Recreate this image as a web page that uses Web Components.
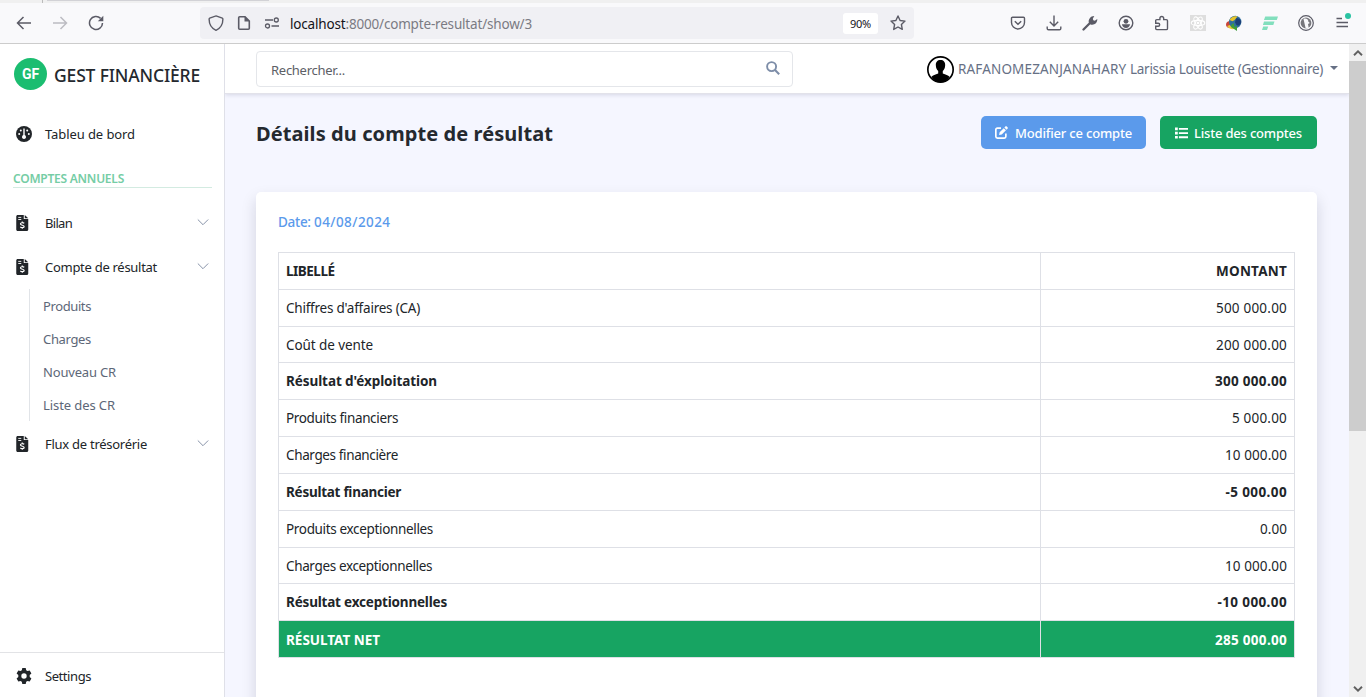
<!DOCTYPE html>
<html lang="fr">
<head>
<meta charset="utf-8">
<title>Gest Financière</title>
<style>
html,body{margin:0;height:100%;overflow:hidden;background:#fff}
body{font-family:"Noto Sans","Open Sans",sans-serif;font-size:13px;color:#212529}
</style>
</head>
<body>
<gf-window></gf-window>
<script>
const define = (name, html, hook) => customElements.define(name, class extends HTMLElement {
  constructor() {
    super();
    const t = document.createElement('template');
    t.innerHTML = html;
    this.attachShadow({ mode: 'open' }).append(t.content.cloneNode(true));
  }
  connectedCallback() { if (hook) hook(this, this.shadowRoot); }
});

// Line of text tracked so that it fills the width given by "w".
define('gf-text', `<style>:host{display:inline-block;white-space:pre;flex:none}</style><slot></slot>`, el => {
  const w = parseFloat(el.getAttribute('w'));
  if (!w) return;
  const n = el.textContent.length;
  const natural = el.getBoundingClientRect().width;
  if (natural) el.style.letterSpacing = ((w - natural) / n).toFixed(3) + 'px';
});

const ICONS = {
  back: ['0 0 16 16', '<path d="M15 8H1.5M7.5 2 1.5 8l6 6" class="s" stroke-width="1.5"/>'],
  fwd: ['0 0 16 16', '<path d="M1 8h13.500M8.500 2l6 6-6 6" class="s" stroke-width="1.5"/>'],
  reload: ['0 0 16 16', '<path d="M14.500 8A6.500 6.500 0 1 1 12.600 3.400" class="s" stroke-width="1.500"/><path d="M15.300.8v5.400H9.800z"/>'],
  shield: ['0 0 16 16', '<path d="M8 .9 14.300 3.200c.4.2.6.500.6.900 0 5.200-2.500 9.300-6.900 11.200C3.600 13.400 1.100 9.300 1.100 4.100c0-.4.2-.7.6-.9z" class="s" stroke-width="1.400"/>'],
  page: ['0 0 16 16', '<path d="M3.700 1.700H9L13.300 6v7.300c0 .7-.400 1-1 1H3.700c-.6 0-1-.3-1-1V2.700c0-.6.4-1 1-1z" class="s" stroke-width="1.600"/><path d="M8.500 1v5.500H14z"/>'],
  perms: ['0 0 16 16', '<path d="M1 5h8M7.500 11H15" class="s" stroke-width="1.400"/><circle cx="12.300" cy="5" r="2" class="s" stroke-width="1.300"/><circle cx="3.500" cy="11" r="2" class="s" stroke-width="1.300"/>'],
  star: ['0 0 16 16', '<path d="M8 1l2.100 4.500 4.900.6-3.600 3.400.9 4.900L8 12l-4.300 2.400.9-4.900L1 6.100l4.900-.6z" class="s" stroke-width="1.400" stroke-linejoin="round"/>'],
  pocket: ['0 0 16 16', '<path d="M2.500 2.200h11c.6 0 1 .4 1 1V7.500a6.500 6.500 0 0 1-13 0V3.200c0-.6.4-1 1-1z" class="s" stroke-width="1.400"/><path d="M4.800 6.300 8 9.300l3.200-3" class="s" stroke-width="1.500"/>'],
  down: ['0 0 16 16', '<path d="M8 .5v10.300M3.800 6.800 8 11l4.200-4.200M1.200 11.500v2c0 .8.500 1.300 1.300 1.300h11c.8 0 1.300-.5 1.300-1.300v-2" class="s" stroke-width="1.400"/>'],
  wrench: ['0 0 16 16', '<path d="M1.500 14.500 8.500 7.500" class="s" stroke-width="2.300" stroke-linecap="round"/><path d="M8.500 9.500 6.800 7.500C6.200 4.500 8.300 1 12.300 1L10.800 3.800l.5 1.500 1.500.4L15.300 4c.2 4-3 6.500-6.800 5.500z"/>'],
  account: ['0 0 16 16', '<circle cx="8" cy="8" r="6.800" class="s" stroke-width="1.400"/><circle cx="8" cy="6.300" r="2.400"/><path d="M3.900 9.300h8.200c-.4 2.200-2 3.700-4.100 3.700s-3.700-1.500-4.100-3.700z"/>'],
  puzzle: ['0 0 16 16', '<path d="M2.700 14.600h9.600c.8 0 1.200-.4 1.200-1.200V5.800c0-.8-.4-1.200-1.200-1.200H9.700V3.400a1.900 1.900 0 0 0-3.800 0v1.200H2.700c-.6 0-1 .4-1 1v2.600h2.500a1.500 1.500 0 0 1 0 3H1.700v2.400c0 .6.400 1 1 1z" class="s" stroke-width="1.400"/>'],
  react: ['0 0 16 16', '<path d="M0 0h16v16H0z" fill="#dedede"/><g fill="none" stroke="#fff" stroke-width="1.100"><ellipse cx="8" cy="8" rx="6.800" ry="2.600"/><ellipse cx="8" cy="8" rx="6.800" ry="2.600" transform="rotate(60 8 8)"/><ellipse cx="8" cy="8" rx="6.800" ry="2.600" transform="rotate(120 8 8)"/></g><circle cx="8" cy="8" r="1.300" fill="#fff"/>'],
  globe: ['0 0 16 16', '<ellipse cx="4.500" cy="9.500" rx="4.500" ry="3.600" fill="#c9443a"/><path d="M1 11c2 3 5 3.500 7.500 3L7 9z" fill="#e7c83a"/><circle cx="9.200" cy="7" r="6.200" fill="#2f6f9c"/><path d="M3.500 5C5 1.500 9 .5 11.500 1.500 10 3 9.500 5 6.500 6.200z" fill="#e8c52c"/><path d="M10 3.500c2-.8 4.300.5 5 2.500s-1 4.500-3 4.500-2-2-3-3z" fill="#1c3f78"/><path d="M5.500 9.500 8 8v3l2 1 1-2v6L5 12z" fill="#3f9d3a"/>'],
  bars: ['0 0 16 16', '<g fill="#82dfbd"><path d="M3.200 1.500H16L14.800 5H2zM2 6.500h10.500L11.300 10H.9zM1.200 11.500h5L5 15H0z"/></g>'],
  duck: ['0 0 16 16', '<circle cx="8" cy="8" r="7.300" class="s" stroke-width="1.200"/><circle cx="8" cy="8" r="5.400" fill="#77777c"/><path d="M5.500 4c2-1.200 4.800-.2 4.900 2.800l1.500 1.300-1.900.8.7 4.200-3 .5z" fill="#f9f9fb"/>'],
  menu: ['0 0 16 16', '<path d="M2.500 3.500h5.500M2.500 7.500h11.500M2.500 11.500h11.500" class="s" stroke-width="1.300"/>'],
  gauge: ['0 0 16 16', '<circle cx="8" cy="8" r="8"/><g fill="#fff"><path d="M7.300 2.500h1.400v6.600a2 2 0 1 1-1.400 0z"/><circle cx="4.800" cy="4.600" r="1"/><circle cx="11.200" cy="4.600" r="1"/><circle cx="3.200" cy="8" r="1"/><circle cx="12.800" cy="8" r="1"/></g>'],
  invoice: ['0 0 12 16', '<path d="M1.500 0H7.500v4H12v10.500c0 .9-.6 1.500-1.500 1.500h-9C.6 16 0 15.400 0 14.500v-13C0 .6.600 0 1.500 0zM8.500 0 12 3.200H8.500z"/><path d="M2 2.400h3M2 4.500h3" stroke="#fff" stroke-width=".9"/><path d="M8 8.300C6.500 7.300 4.100 7.600 4.200 9c.1 1.500 3.700 1 3.700 2.500 0 1.400-2.500 1.500-3.900.5M6 6.500v1.200M6 12.500v1.300" fill="none" stroke="#fff" stroke-width="1.200"/>'],
  gear: ['0 0 16 16', '<path fill-rule="evenodd" d="M6.300 0h3.400l.5 2.300 1.300.8L13.700 2.400l1.700 3-1.700 1.600v2l1.700 1.600-1.700 3-2.200-.7-1.300.8L9.700 16H6.300l-.5-2.300-1.300-.8-2.200.7-1.700-3L2.300 9V7L.6 5.400l1.700-3 2.200.7 1.300-.8zM8 5.300a2.700 2.700 0 1 0 0 5.400 2.700 2.700 0 0 0 0-5.400z"/>'],
  chev: ['0 0 12 8', '<path d="M.8 1.500 6 6.700l5.200-5.200" class="s" stroke-width="1"/>'],
  search: ['0 0 14 14', '<circle cx="5.600" cy="5.600" r="4.500" class="s" stroke-width="1.900"/><path d="m9 9 4.200 4.200" class="s" stroke-width="2.100"/>'],
  avatar: ['0 0 26 26', '<circle cx="13" cy="13" r="12.200" fill="#fff" stroke="#000" stroke-width="1.600"/><path d="M13 3.800c3 0 4.600 2 4.500 5-.1 2.700-1 4.400-2.300 5.700v2.300c2.700.9 5.200 1.700 6.500 3.200C19.700 23.500 16.600 25.300 13 25.300S6.300 23.500 4.300 20c1.300-1.500 3.800-2.300 6.500-3.200v-2.300C9.500 13.200 8.600 11.500 8.500 8.800c-.1-3 1.500-5 4.500-5z"/>'],
  edit: ['0 0 14 14', '<path d="M6.500 2.300H2.600C1.500 2.300.9 2.900.9 4v7.400c0 1.100.6 1.700 1.700 1.700H10c1.100 0 1.700-.6 1.700-1.700V8" class="s" stroke-width="1.800"/><path d="M4.400 9.800 5 6.700 9.400 2.300l2.400 2.400L7.300 9.200zM10.100 1.600l1-1c.5-.5 1.100-.5 1.600 0l.8.8c.5.5.5 1.100 0 1.600l-1 1z"/>'],
  list: ['0 0 14 12', '<path d="M0 .1h3v3H0zM0 4.600h3v3H0zM0 9.100h3v2.900H0zM4.200.6H14v2H4.200zM4.200 5.100H14v2H4.200zM4.200 9.600H14v2H4.200z"/>'],
  up: ['0 0 10 6', '<path d="M1 5.200 5 1.300l4 3.900" class="s" stroke-width="1.900"/>'],
  dn: ['0 0 10 6', '<path d="M1 .8 5 4.700 9 .8" class="s" stroke-width="1.900"/>']
};
define('gf-icon', `<style>:host{display:inline-block;flex:none;line-height:0}#i{height:100%}svg{display:block;width:100%;height:100%;fill:currentColor}.s{fill:none;stroke:currentColor}</style><div id="i"></div>`, (el, r) => {
  const [vb, body] = ICONS[el.getAttribute('name')];
  const s = (el.getAttribute('size') || '16').split('x');
  el.style.width = s[0] + 'px';
  el.style.height = (s[1] || s[0]) + 'px';
  r.getElementById('i').innerHTML = `<svg viewBox="${vb}">${body}</svg>`;
});

define('gf-browser-bar', `<style>
:host{display:block;height:44px;box-sizing:border-box;background:#f9f9fb;border-bottom:1px solid #ccc;color:#5b5b66}
.tabs{height:3px;background:#f0f0f0;display:flex}
.edge{width:42px;border-right:1px solid #bbb}
.tab{margin-left:4px;width:222px;height:1px;background:#d2d2d6}
.row{height:40px;display:flex;align-items:center;box-sizing:border-box;padding:0 16px}
.nav{display:flex;gap:20px;width:184px}
.url{width:714px;height:32px;border-radius:4px;background:#f0f0f4;display:flex;align-items:center;box-sizing:border-box;padding:0 8px;color:#7b7b83}
.url gf-icon{margin-right:12px;color:#5b5b66}
.url b{font-weight:400;color:#15141a}
.addr{font-size:13.500px;position:relative;top:1px}
.zoom{margin-left:auto;margin-right:12px;background:#fff;width:35px;height:21px;border-radius:3px;display:flex;justify-content:center;align-items:center;color:#15141a;font-size:11px}
.url gf-icon.star{margin:0}
.tools{margin-left:auto;display:flex;gap:20px}
.m{position:relative;display:flex}
.m i{position:absolute;width:6px;height:6px;border-radius:50%;background:#2ac3a2;right:-1px;top:-2px}
</style>
<div class="tabs"><div class="edge"></div><div class="tab"></div></div>
<div class="row">
<div class="nav"><gf-icon name="back"></gf-icon><gf-icon name="fwd" style="color:#bcbcc2"></gf-icon><gf-icon name="reload"></gf-icon></div>
<div class="url"><gf-icon name="shield"></gf-icon><gf-icon name="page"></gf-icon><gf-icon name="perms" style="margin-right:10px"></gf-icon><gf-text class="addr" w="242"><b>localhost</b>:8000/compte-resultat/show/3</gf-text>
<div class="zoom"><gf-text w="21">90%</gf-text></div><gf-icon class="star" name="star"></gf-icon></div>
<div class="tools"><gf-icon name="pocket"></gf-icon><gf-icon name="down"></gf-icon><gf-icon name="wrench"></gf-icon><gf-icon name="account"></gf-icon><gf-icon name="puzzle"></gf-icon><gf-icon name="react"></gf-icon><gf-icon name="globe"></gf-icon><gf-icon name="bars"></gf-icon><gf-icon name="duck"></gf-icon><div class="m"><gf-icon name="menu"></gf-icon><i></i></div></div>
</div>`);

define('gf-nav-item', `<style>
:host{display:flex;align-items:center;height:44px;padding:0 15px 0 16px;color:#212529}
.ic{width:29px;display:flex}
.ch{margin-left:auto;color:#8793a8;display:flex;position:relative;top:-1px}
:host(:not([chevron])) .ch{display:none}
</style><div class="ic"></div><slot></slot><div class="ch"><gf-icon name="chev" size="12x8"></gf-icon></div>`, (el, r) => {
  const i = document.createElement('gf-icon');
  i.setAttribute('name', el.getAttribute('icon'));
  i.setAttribute('size', el.getAttribute('icon') === 'invoice' ? '12.5x16' : '16');
  r.querySelector('.ic').replaceChildren(i);
});
define('gf-sub-item', `<style>:host{display:flex;align-items:center;height:33px;padding-left:13px}</style><slot></slot>`);
define('gf-sub-menu', `<style>:host{display:block;margin:0 0 1px 29px;border-left:1px solid #e1e4e8;color:#5d6778}</style><slot></slot>`);

define('gf-sidebar', `<style>
:host{display:flex;flex-direction:column;width:225px;box-sizing:border-box;border-right:1px solid #dfe0e8;background:#fff;font-size:13px}
.brand{display:flex;align-items:center;height:60px;padding-left:14px;font-size:17.500px;font-weight:500;color:#24282e}
.brand gf-text{position:relative;top:1px}
.logo{width:33px;height:32px;border-radius:50%;background:#1bbd70;color:#fff;font:bold 14px Roboto,sans-serif;display:flex;align-items:center;justify-content:center;margin-right:7px}
.sec{margin:1px 12px 13px 13px;height:31px;box-sizing:border-box;border-bottom:1px solid #d3ebe1;color:#75cda5;font-weight:600;font-size:12px;display:flex;align-items:flex-end;line-height:17px}
.foot{margin-top:auto;border-top:1px solid #e2e3e6;height:44px}
.foot gf-nav-item{height:46px}
.foot gf-nav-item::part(x){top:0}
</style>
<div class="brand"><div class="logo">GF</div><gf-text w="146">GEST FINANCIÈRE</gf-text></div>
<gf-nav-item icon="gauge" style="margin-top:8px"><gf-text w="90">Tableu de bord</gf-text></gf-nav-item>
<div class="sec"><gf-text w="111">COMPTES ANNUELS</gf-text></div>
<gf-nav-item icon="invoice" chevron><gf-text w="27">Bilan</gf-text></gf-nav-item>
<gf-nav-item icon="invoice" chevron><gf-text w="112">Compte de résultat</gf-text></gf-nav-item>
<gf-sub-menu><gf-sub-item><gf-text w="48">Produits</gf-text></gf-sub-item><gf-sub-item><gf-text w="48">Charges</gf-text></gf-sub-item><gf-sub-item><gf-text w="73">Nouveau CR</gf-text></gf-sub-item><gf-sub-item><gf-text w="72">Liste des CR</gf-text></gf-sub-item></gf-sub-menu>
<gf-nav-item icon="invoice" chevron><gf-text w="102">Flux de trésorérie</gf-text></gf-nav-item>
<div class="foot"><gf-nav-item icon="gear"><gf-text w="46">Settings</gf-text></gf-nav-item></div>`);

define('gf-topbar', `<style>
:host{display:flex;height:50px;flex:none;box-sizing:border-box;background:#fff;border-bottom:1px solid #e2e2ea;box-shadow:0 1px 4px rgba(30,30,70,.14);align-items:center;padding:0 10px 0 31px;position:relative;clip-path:inset(0 0 -8px 0)}
.search{width:537px;height:36px;box-sizing:border-box;border:1px solid #e4e6ea;border-radius:4px;display:flex;align-items:center;justify-content:space-between;padding:2px 12px 0 14px;color:#5c6066}
.search gf-icon{position:relative;top:-2px;color:#7d8da8}
.user{margin-left:auto;display:flex;align-items:center;color:#667085;font-size:13.500px}
.user gf-icon{color:#000;margin-right:4px;position:relative;top:1px}
.caret{border:4px solid transparent;border-top-color:#667085;border-bottom:0;margin-left:7px;margin-right:1px;position:relative;top:-1px}
</style>
<div class="search"><gf-text w="74">Rechercher...</gf-text><gf-icon name="search" size="14"></gf-icon></div>
<div class="user"><gf-icon name="avatar" size="27"></gf-icon><gf-text w="172">RAFANOMEZANJANAHARY </gf-text><gf-text w="193">Larissia Louisette (Gestionnaire)</gf-text><span class="caret"></span></div>`);

define('gf-button', `<style>:host{display:flex;align-items:center;box-sizing:border-box;height:33px;border-radius:5px;padding:0 14px;color:#fff;font-size:13px;font-weight:500;background:var(--bg)}</style><slot></slot>`);

define('gf-table', `<style>
:host{display:grid;grid-template-columns:762px 1fr;border:1px solid #dee0e6;width:1017px;box-sizing:border-box;font-size:13.500px;height:406px;grid-template-rows:37px 37px 36px repeat(5,37px) 36px 37px 36px}
div{display:flex;align-items:center;padding:0 7px;border-bottom:1px solid #dee0e6;box-sizing:border-box}
.l{border-right:1px solid #dee0e6}
.r{justify-content:flex-end}
.b{font-weight:700}
.n{background:#17a462;color:#fff;border-bottom:0;padding-top:1px}
</style>`, (el, r) => {
  const rows = [
    ['LIBELLÉ', 48.5, 'MONTANT', 71, 'b'],
    ["Chiffres d'affaires (CA)", 134, '500 000.00', 71],
    ['Coût de vente', 87, '200 000.00', 71],
    ["Résultat d'éxploitation", 151, '300 000.00', 72, 'b'],
    ['Produits financiers', 112, '5 000.00', 55],
    ['Charges financière', 112, '10 000.00', 62],
    ['Résultat financier', 115, '-5 000.00', 61.5, 'b'],
    ['Produits exceptionnelles', 147, '0.00', 27],
    ['Charges exceptionnelles', 146, '10 000.00', 62],
    ['Résultat exceptionnelles', 161, '-10 000.00', 69.5, 'b'],
    ['RÉSULTAT NET', 94, '285 000.00', 72, 'b n']
  ];
  for (const [a, wa, b, wb, c = ''] of rows) {
    const t = document.createElement('template');
    t.innerHTML = `<div class="l ${c}"><gf-text w="${wa}">${a}</gf-text></div><div class="r ${c}"><gf-text w="${wb}">${b}</gf-text></div>`;
    r.append(t.content);
  }
});

define('gf-card', `<style>:host{display:block;box-sizing:border-box;width:1061px;height:560px;flex:none;background:#fff;border-radius:5px;box-shadow:0 7px 15px rgba(20,20,50,.15);padding:0 22px}
.date{height:60px;display:flex;align-items:center;color:#5b9aeb;font-weight:500;font-size:13.500px}</style>
<div class="date"><slot name="date"></slot></div><slot></slot>`);

define('gf-main', `<style>
:host{display:flex;flex-direction:column;min-width:0;overflow:hidden;background:#f5f6ff}
.content{padding:22px 32px 0 31px;display:flex;flex-direction:column;min-height:0}
.head{display:flex;align-items:center;height:33px;margin-bottom:43px;gap:14px}
.title{font-size:20px;font-weight:700;margin-right:auto;color:#24292f;padding-top:1px}
gf-button gf-icon{margin-right:7px}
</style>
<gf-topbar></gf-topbar>
<div class="content">
<div class="head"><gf-text class="title" w="297">Détails du compte de résultat</gf-text>
<gf-button style="--bg:#5b9aeb;width:165px"><gf-icon name="edit" size="13"></gf-icon><gf-text w="117">Modifier ce compte</gf-text></gf-button>
<gf-button style="--bg:#17a462;width:157px;padding-left:15px"><gf-icon name="list" size="13x12" style="margin-right:6px"></gf-icon><gf-text w="108">Liste des comptes</gf-text></gf-button></div>
<gf-card><span slot="date"><gf-text w="36">Date: </gf-text><gf-text w="76.5">04/08/2024</gf-text></span><gf-table></gf-table></gf-card>
</div>`);

define('gf-scrollbar', `<style>:host{display:flex;flex-direction:column;width:17px;background:#f0f0f0;color:#606060}
.a{height:17px;display:flex;align-items:center;justify-content:center}.t{height:370px;background:#cdcdcd}.a:last-child{margin-top:auto}</style>
<div class="a"><gf-icon name="up" size="10x6"></gf-icon></div><div class="t"></div><div class="a"><gf-icon name="dn" size="10x6"></gf-icon></div>`);

define('gf-window', `<style>:host{display:grid;grid-template-rows:44px 1fr;height:100vh}
.app{display:grid;grid-template-columns:225px 1fr 17px;min-height:0}.app>*{min-height:0}</style>
<gf-browser-bar></gf-browser-bar>
<div class="app"><gf-sidebar></gf-sidebar><gf-main></gf-main><gf-scrollbar></gf-scrollbar></div>`);
</script>
</body>
</html>
